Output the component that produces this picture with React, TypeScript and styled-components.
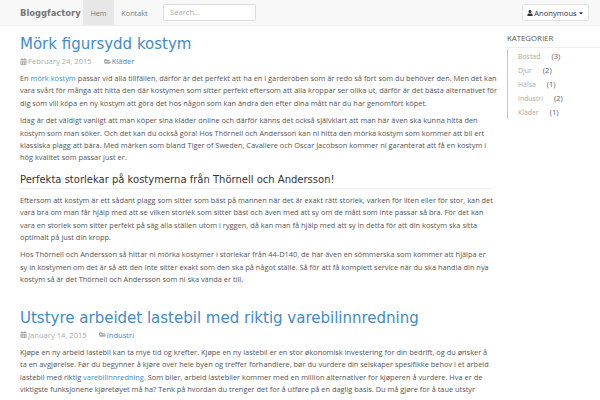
import { createGlobalStyle } from 'styled-components'
import styled from 'styled-components'
import { FaCalendarAlt, FaFolderOpen, FaUser, FaCaretDown } from 'react-icons/fa'

const GlobalStyle = createGlobalStyle`
  html, body {
    margin: 0;
    height: 400px;
    overflow: hidden;
    background: #fff;
    font-family: "Open Sans", "Liberation Sans", sans-serif;
  }
  * {
    box-sizing: border-box;
  }
`

const Navbar = styled.nav`
  height: 26px;
  background: #f8f8f8;
  border-bottom: 1px solid #efefef;
  display: flex;
  align-items: stretch;
  padding: 0 11px 0 20px;
`

const Brand = styled.span`
  font-family: "DejaVu Sans", sans-serif;
  font-size: 8.4px;
  font-weight: 700;
  color: #777;
  align-self: center;
  width: 63px;
  white-space: nowrap;
`

const NavItem = styled.span<{ $active?: boolean }>`
  display: flex;
  align-items: center;
  justify-content: center;
  width: ${(props) => (props.$active ? '31px' : '41px')};
  margin-right: ${(props) => (props.$active ? '0' : '8px')};
  font-size: 7.3px;
  color: #777;
  background: ${(props) => (props.$active ? '#e7e7e7' : 'transparent')};
`

const Search = styled.div`
  width: 93px;
  height: 17px;
  margin-top: 4px;
  background: #fff;
  border: 1px solid #ddd;
  border-radius: 2px;
  padding: 0 6px;
  font-size: 7.6px;
  line-height: 14px;
  color: #aaa;
`

const UserButton = styled.div`
  margin: 4px 0 0 auto;
  width: 67px;
  height: 17px;
  background: #fff;
  border: 1px solid #e2e2e2;
  border-radius: 2px;
  display: flex;
  align-items: center;
  justify-content: center;
  gap: 1px;
  font-size: 7.6px;
  color: #333;
  svg {
    font-size: 6px;
  }
`

const Page = styled.div`
  display: flex;
  align-items: flex-start;
  padding-left: 20px;
`

const Content = styled.main`
  width: 472px;
  flex-shrink: 0;
`

const PostTitle = styled.h2`
  margin: 0;
  font-family: "DejaVu Sans", sans-serif;
  font-size: 15px;
  font-weight: 400;
  line-height: 20px;
  color: #428bca;
  white-space: nowrap;
`

const Post = styled.article`
  padding-top: 8px;
  & + & {
    padding-top: 17px;
  }
`

const Meta = styled.div`
  display: flex;
  align-items: center;
  height: 12px;
  margin: 1px 0 5px;
  font-size: 7.6px;
  color: #aaa;
  svg {
    font-size: 7px;
    margin-right: 1px;
  }
`

const MetaDate = styled.span`
  display: flex;
  align-items: center;
  margin-right: 12px;
`

const MetaLink = styled.span`
  color: #428bca;
`

const Text = styled.p`
  margin: 0 0 5px;
  font-size: 7.4px;
  line-height: 12.4px;
  color: #555;
  white-space: pre;
`

const TextLink = styled.span`
  color: #428bca;
`

const SubTitle = styled.h3`
  margin: 9px 0 5px;
  padding-bottom: 1px;
  font-family: "DejaVu Sans", sans-serif;
  font-size: 10px;
  font-weight: 400;
  line-height: 14px;
  color: #333;
  border-bottom: 1px solid #eee;
  white-space: nowrap;
`

const Sidebar = styled.aside`
  flex: 1;
  margin-left: 15px;
  padding-top: 6px;
`

const SideTitle = styled.div`
  font-size: 7.8px;
  line-height: 12px;
  color: #555;
  padding-bottom: 3px;
  border-bottom: 1px solid #eee;
  margin-bottom: 1px;
`

const CategoryList = styled.ul`
  list-style: none;
  margin: 0;
  padding: 0 0 0 10px;
  border-left: 1px solid #c9c5d8;
`

const Category = styled.li`
  height: 14px;
  display: flex;
  align-items: center;
  font-size: 6.9px;
  color: #aaa;
`

const Count = styled.span`
  color: #666;
  margin-left: 11px;
  font-size: 7.6px;
`

const categories = [
  { name: 'Bostad', count: 3 },
  { name: 'Djur', count: 2 },
  { name: 'Hälsa', count: 1 },
  { name: 'Industri', count: 2 },
  { name: 'Kläder', count: 1 },
]

export default function App() {
  return (
    <>
      <GlobalStyle />
      <Navbar>
        <Brand>Bloggfactory</Brand>
        <NavItem $active>Hem</NavItem>
        <NavItem>Kontakt</NavItem>
        <Search>Search...</Search>
        <UserButton>
          <FaUser />
          Anonymous
          <FaCaretDown />
        </UserButton>
      </Navbar>
      <Page>
        <Content>
          <Post>
            <PostTitle>Mörk figursydd kostym</PostTitle>
            <Meta>
              <MetaDate>
                <FaCalendarAlt />
                February 24, 2015
              </MetaDate>
              <FaFolderOpen />
              <MetaLink>Kläder</MetaLink>
            </Meta>
            <Text>
              En <TextLink>mörk kostym</TextLink> passar vid alla tillfällen, därför är det perfekt att ha en i garderoben som är redo så fort som du behöver den. Men det kan{'\n'}
              vara svårt för många att hitta den där kostymen som sitter perfekt eftersom att alla kroppar ser olika ut, därför är det bästa alternativet för{'\n'}
              dig som vill köpa en ny kostym att göra det hos någon som kan ändra den efter dina mått när du har genomfört köpet.
            </Text>
            <Text>
              Idag är det väldigt vanligt att man köper sina kläder online och därför känns det också självklart att man här även ska kunna hitta den{'\n'}
              kostym som man söker. Och det kan du också göra! Hos Thörnell och Andersson kan ni hitta den mörka kostym som kommer att bli ert{'\n'}
              klassiska plagg att bära. Med märken som bland Tiger of Sweden, Cavaliere och Oscar Jacobson kommer ni garanterat att få en kostym i{'\n'}
              hög kvalitet som passar just er.
            </Text>
            <SubTitle>Perfekta storlekar på kostymerna från Thörnell och Andersson!</SubTitle>
            <Text>
              Eftersom att kostym är ett sådant plagg som sitter som bäst på mannen när det är exakt rätt storlek, varken för liten eller för stor, kan det{'\n'}
              vara bra om man får hjälp med att se vilken storlek som sitter bäst och även med att sy om de mått som inte passar så bra. För det kan{'\n'}
              vara en storlek som sitter perfekt på säg alla ställen utom i ryggen, då kan man få hjälp med att sy in detta för att din kostym ska sitta{'\n'}
              optimalt på just din kropp.
            </Text>
            <Text>
              Hos Thörnell och Andersson så hittar ni mörka kostymer i storlekar från 44-D140, de har även en sömmerska som kommer att hjälpa er{'\n'}
              sy in kostymen om det är så att den inte sitter exakt som den ska på något ställe. Så för att få komplett service när du ska handla din nya{'\n'}
              kostym så är det Thörnell och Andersson som ni ska vända er till.
            </Text>
          </Post>
          <Post>
            <PostTitle>Utstyre arbeidet lastebil med riktig varebilinnredning</PostTitle>
            <Meta>
              <MetaDate>
                <FaCalendarAlt />
                January 14, 2015
              </MetaDate>
              <FaFolderOpen />
              <MetaLink>Industri</MetaLink>
            </Meta>
            <Text>
              Kjøpe en ny arbeid lastebil kan ta mye tid og krefter. Kjøpe en ny lastebil er en stor økonomisk investering for din bedrift, og du ønsker å{'\n'}
              ta en avgjørelse. Før du begynner å kjøre over hele byen og treffer forhandlere, bør du vurdere din selskaper spesifikke behov i et arbeid{'\n'}
              lastebil med riktig <TextLink>varebilinnredning</TextLink>. Som biler, arbeid lastebiler kommer med en million alternativer for kjøperen å vurdere. Hva er de{'\n'}
              viktigste funksjonene kjøretøyet må ha? Tenk på hvordan du trenger det for å utføre på en daglig basis. Du må gjøre for å taue utstyr
            </Text>
          </Post>
        </Content>
        <Sidebar>
          <SideTitle>KATEGORIER</SideTitle>
          <CategoryList>
            {categories.map((category) => (
              <Category key={category.name}>
                {category.name}
                <Count>({category.count})</Count>
              </Category>
            ))}
          </CategoryList>
        </Sidebar>
      </Page>
    </>
  )
}
